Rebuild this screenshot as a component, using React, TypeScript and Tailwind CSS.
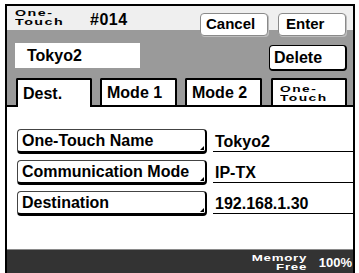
import React from "react";

function Wide({ lines, scale, origin }: { lines: string[]; scale: string; origin: string }) {
  return (
    <div className="flex flex-col">
      {lines.map((l) => (
        <span key={l} className={`inline-block ${origin} ${scale}`}>
          {l}
        </span>
      ))}
    </div>
  );
}

function RowButton({ label }: { label: string }) {
  return (
    <div className="relative w-[190px] h-[25px] bg-white border border-[#444] border-r-2 border-r-black border-b-[3px] border-b-black rounded-[4px] flex items-center pl-[4px] text-[16px] font-bold text-black leading-[18px] whitespace-nowrap overflow-hidden">
      {label}
      <span className="absolute right-[1px] bottom-[1px] w-0 h-0 border-l-[4px] border-l-transparent border-b-[4px] border-b-black" />
    </div>
  );
}

function Row({ label, value }: { label: string; value: string }) {
  return (
    <div className="flex h-[25px] items-start">
      <RowButton label={label} />
      <div className="ml-[6px] flex-1 h-[23px] border-b border-black flex items-end pl-[2px] text-[16px] font-bold leading-[18px] text-black">
        {value}
      </div>
    </div>
  );
}

export default function App() {
  return (
    <div className="w-[359px] h-[273px] bg-white overflow-hidden font-['Liberation_Sans',Arial,sans-serif]">
      <div className="ml-[5px] mt-[4px] w-[350px] h-[269px] border-2 border-b-0 border-black flex flex-col">
        {/* top area */}
        <div className="h-[99px] flex flex-col bg-[linear-gradient(to_bottom,#efefef_24px,#9a9a9a_24px)]">
          <div className="h-[30px] flex items-start">
            <div className="w-[83px] pl-[8px] pt-[2px] text-[9.5px] leading-[9px] font-bold tracking-[1px] text-black">
              <Wide lines={["One-", "Touch"]} scale="scale-x-[1.5]" origin="origin-left" />
            </div>
            <div className="pt-[5px] text-[16px] leading-[18px] font-bold tracking-[0.5px] text-black">#014</div>
            <div className="ml-auto mr-[7px] mt-[7px] flex gap-[10px]">
              <div className="w-[68px] h-[23px] bg-white border border-[#8a8a8a] rounded-[4px] shadow-[1px_1px_0_#bdbdbd] flex items-center pl-[5px] text-[15px] font-bold text-black">
                Cancel
              </div>
              <div className="w-[68px] h-[23px] bg-white border border-[#8a8a8a] rounded-[4px] shadow-[1px_1px_0_#bdbdbd] flex items-center pl-[7px] text-[15px] font-bold text-black">
                Enter
              </div>
            </div>
          </div>
          <div className="mt-[7px] h-[28px] flex items-start">
            <div className="ml-[8px] w-[125px] h-[25px] bg-white flex items-center pl-[12px] text-[16px] font-bold text-black">
              Tokyo2
            </div>
            <div className="ml-auto mr-[6px] mt-[2px] w-[78px] h-[26px] bg-white border border-black border-r-2 border-b-2 rounded-[4px] flex items-center pl-[4px] text-[16px] font-bold text-black">
              Delete
            </div>
          </div>
          <div className="mt-[7px] h-[27px] flex items-start pl-[9px]">
            <div className="relative z-10 w-[76px] h-[29px] bg-white border-2 border-b-0 border-black rounded-t-[2px] flex items-center pl-[5px] text-[16px] font-bold text-black">
              Dest.
            </div>
            <div className="ml-[8px] w-[77px] h-[27px] bg-white border-2 border-b-0 border-black rounded-t-[2px] flex items-center pl-[5px] text-[16px] font-bold text-black">
              Mode 1
            </div>
            <div className="ml-[8px] w-[77px] h-[27px] bg-white border-2 border-b-0 border-black rounded-t-[2px] flex items-center pl-[5px] text-[16px] font-bold text-black">
              Mode 2
            </div>
            <div className="ml-[9px] w-[76px] h-[27px] bg-white border-2 border-b-0 border-black rounded-t-[2px] flex items-center pl-[7px] text-[9.5px] leading-[9px] font-bold tracking-[1px] text-black">
              <Wide lines={["One-", "Touch"]} scale="scale-x-[1.45]" origin="origin-left" />
            </div>
          </div>
        </div>
        {/* content */}
        <div className="h-[144px] bg-white border-t-2 border-black pt-[22px] pl-[10px] flex flex-col gap-[6px]">
          <Row label="One-Touch Name" value="Tokyo2" />
          <Row label="Communication Mode" value="IP-TX" />
          <Row label="Destination" value="192.168.1.30" />
        </div>
        {/* status bar */}
        <div className="h-[24px] bg-[#333333] border-t border-[#8a8a8a] flex items-center justify-end pr-[1px] text-white font-bold">
          <div className="w-[56px] text-right text-[9.5px] leading-[9px] tracking-[0.5px] pt-[1px]">
            <Wide lines={["Memory", "Free"]} scale="scale-x-[1.4]" origin="origin-right" />
          </div>
          <div className="ml-[12px] text-[13px] leading-[15px] pt-[1px]">100%</div>
        </div>
      </div>
    </div>
  );
}
